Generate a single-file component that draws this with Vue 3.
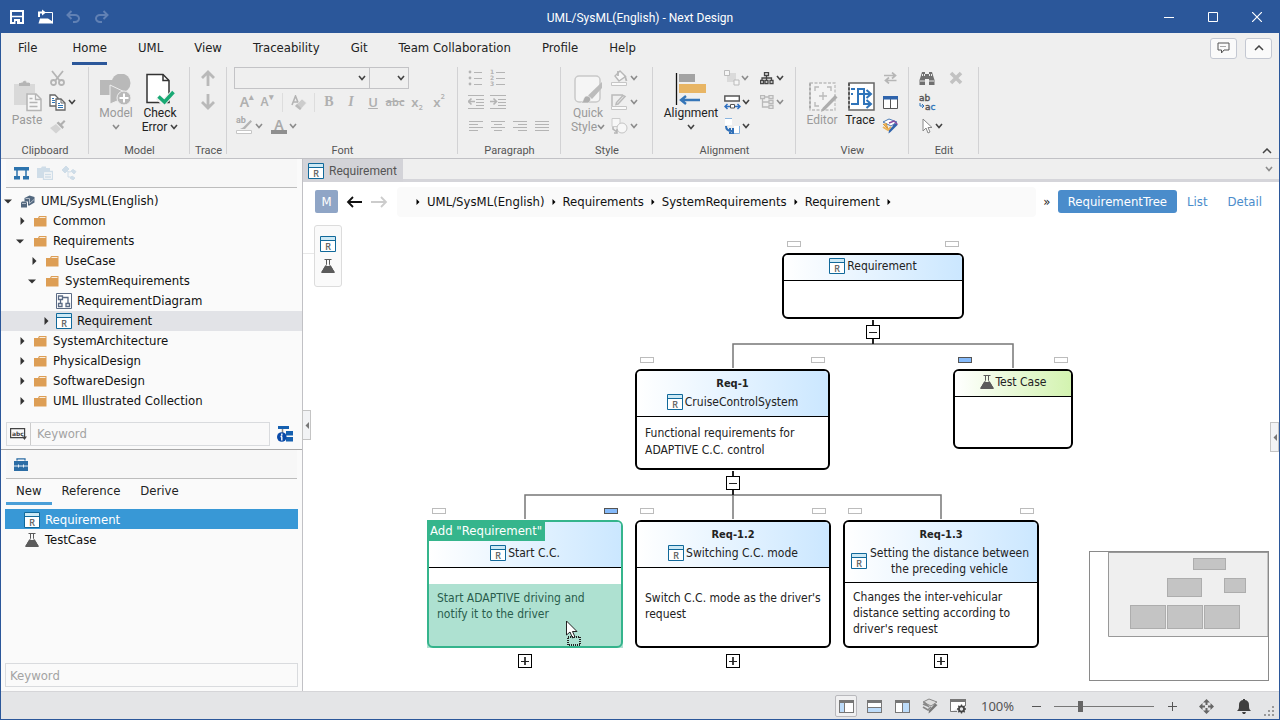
<script setup>
import { h, ref } from 'vue'

const G = '#b4b4b4'
const chev = (c) => [8, 6, `<path d="M1 1l3 3.500L7 1" fill="none" stroke="${c}" stroke-width="1.600"/>`]
const lines = (arr, c = '#bdbdbd') => arr.map(([x, y, w]) => `<rect x="${x}" y="${y}" width="${w}" height="1" fill="${c}"/>`).join('')
const panelIcon = (blue) => `<rect x=".5" y=".5" width="14" height="12" fill="#fff" stroke="#777"/><path d="M0 1.500h15" stroke="#777" stroke-width="3"/>${blue}`

const icons = {
  save: [14, 14, '<path d="M1 1h12v12H1z" fill="none" stroke="#fff" stroke-width="2"/><path d="M2 6.500h10" stroke="#fff" stroke-width="1.500"/><path d="M4 9h6v5H4z" fill="#fff"/><path d="M5.500 11h1.500v3H5.500z" fill="#2b579a"/>'],
  open: [15, 15, '<path d="M5.500 3.500h9v11" fill="none" stroke="#fff"/><path d="M.5 14.500l1.500-5h8l4.500 3v2z" fill="#fff"/><path d="M1 8V3.500h4" fill="none" stroke="#fff" stroke-width="2"/><path d="M4 .5l4 3-4 3z" fill="#fff"/>'],
  undo: [15, 13, '<path d="M5.500 1L1.500 5l4 4M1.500 5h7.500a4 3.500 0 0 1 0 7H7" fill="none" stroke="#6181b4" stroke-width="2"/>'],
  redo: [15, 13, '<path d="M9.500 1l4 4-4 4M13.500 5H6a4 3.500 0 0 0 0 7h2" fill="none" stroke="#6181b4" stroke-width="2"/>'],
  min: [10, 10, '<path d="M0 5.500h10" stroke="#fff"/>'],
  max: [10, 10, '<path d="M.5.5h9v9h-9z" fill="none" stroke="#fff"/>'],
  close: [10, 10, '<path d="M0 0l10 10M10 0L0 10" stroke="#fff" stroke-width="1.200"/>'],
  talk: [13, 12, '<path d="M1 1h11v7H7l-2.500 3V8H1z" fill="none" stroke="#555"/><path d="M3.500 4.500h6" stroke="#555" stroke-dasharray="1 1"/>'],
  fold: [10, 6, '<path d="M1 5l4-4 4 4" fill="none" stroke="#444" stroke-width="1.500"/>'],
  chev: chev('#444'), chevG: chev('#8c8c8c'),
  paste: [29, 32, '<path d="M1 4h6l1-2h2l2-2 2 2h2l1 2h5v9h-7v12H1z" fill="#d9d9d9"/><path d="M6 6h11V3h-3.500a2 2 0 0 0-4 0H6z" fill="#b5b5b5"/><path d="M14 14h9l5 5v11.500H14z" fill="#f7f7f7" stroke="#b5b5b5" stroke-width="1.500"/><path d="M22.500 14v5.500H28M16.500 18.500h3M16.500 22.500h8M16.500 26.500h8" fill="none" stroke="#b5b5b5" stroke-width="1.300"/>'],
  cut: [15, 16, `<g fill="none" stroke="${G}" stroke-width="1.800"><path d="M2 1l8 10M13 1L5 11"/><circle cx="3.500" cy="12.500" r="2.500"/><circle cx="11.500" cy="12.500" r="2.500"/></g>`],
  copy: [17, 17, '<g fill="#fff" stroke="#666" stroke-width="1.300"><path d="M1 1h5l3 3v8H1z"/><path d="M7 5h5l4 4v7H7z"/></g><path d="M12 5v4h4" fill="none" stroke="#666"/><path d="M3 4.500h2M3 6.500h3M3 8.500h3M9 9.500h2M9 11.500h5M9 13.500h5" stroke="#2e74b5"/>'],
  brush: [16, 15, '<path d="M0 9l6-4 5 5-5 4.500z" fill="#d3d3d3"/><path d="M6.500 4l6 6 1.500-2-2-2 3.500-3.500L14 1 10.500 4.500l-2-2z" fill="#b0b0b0"/>'],
  model: [32, 31, '<circle cx="21" cy="9" r="9.500" fill="#b9b9b9"/><path d="M0 6h15v15H0z" fill="#b9b9b9"/><path d="M10 11l19 9v2L10 30z" fill="#b9b9b9" stroke="#efefef"/><circle cx="24" cy="24" r="7" fill="#b9b9b9" stroke="#efefef"/><path d="M24 19.500v9M19.500 24h9" stroke="#fff" stroke-width="2"/>'],
  check: [32, 32, '<path d="M3 1.500h16l6 6v22H3z" fill="#fff" stroke="#333" stroke-width="1.500"/><path d="M19 1.500v6h6" fill="none" stroke="#333" stroke-width="1.500"/><path d="M14 24l5.500 5.500L30 19" fill="none" stroke="#efefef" stroke-width="6"/><path d="M14.500 23.500l6 5.500 9-10" fill="none" stroke="#19a974" stroke-width="3.500"/>'],
  up: [14, 16, '<path d="M7 16V2M1 8l6-6 6 6" fill="none" stroke="#b9b9b9" stroke-width="2.800"/>'],
  down: [14, 16, '<path d="M7 0v14M1 8l6 6 6-6" fill="none" stroke="#b9b9b9" stroke-width="2.800"/>'],
  eraser: [16, 15, `<path d="M1 10L4.500 1 8 10M2 7h4" fill="none" stroke="${G}" stroke-width="1.600"/><path d="M4 11l7-7 4.500 4-6.500 7z" fill="#ccc" stroke="#efefef" stroke-width=".6"/><path d="M4 11l2-2 4.500 4.500L9 15z" fill="#bababa"/>`],
  pen: [17, 16, `<path d="M14.500 2L7 9.500l-3 1.500h5l7-7.500z" fill="${G}"/><path d="M.5 12.500h15v3H.5z" fill="#fff" stroke="#c6c6c6"/>`],
  bullets: [16, 16, `<g fill="${G}"><circle cx="2" cy="2" r="1.400"/><circle cx="2" cy="8" r="1.400"/><circle cx="2" cy="14" r="1.400"/></g>` + lines([[6, 2, 8], [6, 8, 8], [6, 14, 8]], G)],
  numbers: [16, 20, `<g fill="${G}" font-family="DejaVu Sans" font-weight="bold" font-size="6"><text x="0" y="6">1</text><text x="0" y="12">2</text><text x="0" y="18">3</text></g>` + lines([[6, 4, 9], [6, 10, 9], [6, 16, 9]], G)],
  outdent: [16, 14, lines([[0, 0, 16], [8, 4, 8], [8, 7, 8], [8, 10, 8], [0, 13, 16]], G) + `<path d="M7 6.500H1M3.500 3.500l-3 3 3 3" fill="none" stroke="${G}" stroke-width="1.600"/>`],
  indent: [16, 14, lines([[0, 0, 16], [8, 4, 8], [8, 7, 8], [8, 10, 8], [0, 13, 16]], G) + `<path d="M0 6.500h6M3.500 3.500l3 3-3 3" fill="none" stroke="${G}" stroke-width="1.600"/>`],
  al: [14, 10, lines([[0, 0, 14], [0, 3, 9], [0, 6, 14], [0, 9, 9]], G)],
  ac: [14, 10, lines([[0, 0, 14], [3, 3, 8], [0, 6, 14], [3, 9, 8]], G)],
  ar: [14, 10, lines([[0, 0, 14], [5, 3, 9], [0, 6, 14], [5, 9, 9]], G)],
  aj: [14, 10, lines([[0, 0, 14], [0, 3, 14], [0, 6, 14], [0, 9, 14]], G)],
  quick: [29, 32, '<rect x="1" y="3" width="25" height="26" rx="4" fill="#f5f5f5" stroke="#c9c9c9" stroke-width="1.500"/><path d="M28 9v6L18 26l-4-3.500z" fill="#bcbcbc"/><path d="M7 30c3-1 2-7 6-7s5 5 1 7z" fill="#b0b0b0" stroke="#efefef" stroke-width=".6"/>'],
  fill: [17, 16, '<path d="M4 6l5-5 5.500 5.500L8 11z" fill="#f7f7f7" stroke="#b8b8b8" stroke-width="1.400"/><path d="M7 1v5M14 6l1.500 5" stroke="#b8b8b8" stroke-width="1.800"/><path d="M.5 12.500h15v3H.5z" fill="#fafafa" stroke="#c6c6c6"/>'],
  line: [17, 16, '<path d="M12 1H1v11M14 2.500L7 10l-2 .5.500-2L12 1.500z" fill="none" stroke="#bbb" stroke-width="1.500"/><path d="M.5 12.500h15v3H.5z" fill="#fafafa" stroke="#c6c6c6"/>'],
  shape: [17, 16, '<path d="M1 .5h8v8H1z" fill="#f7f7f7" stroke="#ccc"/><circle cx="11" cy="10" r="5" fill="#f7f7f7" stroke="#c4c4c4"/><path d="M2 9v2l4 3M6 11v4H3" fill="none" stroke="#b5b5b5" stroke-width="1.500"/>'],
  align: [32, 32, '<path d="M1.500 0v32" stroke="#111" stroke-width="1.300"/><path d="M4 1h16v8H4z" fill="#a3a3a3"/><path d="M4 11h27v9H4z" fill="#e8b564"/><path d="M25 27H6M11 23l-5 4 5 4" fill="none" stroke="#3676b8" stroke-width="2.400"/>'],
  grp: [16, 16, '<path d="M3 3h9v9H3z" fill="#dadada"/><path d="M.5.5h5v5h-5zM10 10h5v5h-5z" fill="#f5f5f5" stroke="#bbb"/>'],
  dist: [17, 15, '<path d="M.8 1h14.500v5H.8z" fill="#fff" stroke="#555" stroke-width="1.400"/><path d="M6.500 9.500h4v3.500h-4z" fill="#fff" stroke="#555"/><path d="M6 11.500H1.500M3.500 9L1 11.500 3.500 14M11 11.500h4.500M13.500 9l2.500 2.500-2.500 2.500" fill="none" stroke="#3070c0" stroke-width="1.500"/>'],
  layout: [17, 16, '<path d="M1 0h7v7H1zM10 8h5v7h-5z" fill="#fff"/><path d="M1 .5h7M15.500 8v7.500H10" fill="none" stroke="#8ab4de"/><path d="M2 8c0 4 2 5 6 5M6 10v5.500h3V10" fill="none" stroke="#3070b8" stroke-width="2"/>'],
  org: [14, 13, '<path d="M4.500.5h4v3h-4zM.5 8.500h3v3h-3zM5 8.500h3v3H5zM10 8.500h3v3h-3zM6.500 4v4M2 8V6h9.500v2" fill="none" stroke="#444" stroke-width="1.300"/>'],
  orgG: [14, 14, '<path d="M.5.500h4v3h-4zM9 .500h4v3H9zM9 5.500h4v3H9zM9 10.500h4v3H9zM2.500 4v8H9M2.500 7H9M5 2h4" fill="none" stroke="#b9b9b9" stroke-width="1.300"/>'],
  editor: [31, 32, '<g transform="translate(0 2)"><path d="M3 1h25v27H3z" fill="#f3f3f3" stroke="#bdbdbd" stroke-width="1.300" stroke-dasharray="3 1.500"/><path d="M2 2.500h2M2 7h2M2 11.500h2M2 16h2M2 20.500h2M2 25h2" stroke="#aaa" stroke-width="2.500"/><path d="M8 9V5h4M20 5h4v4M8 20v4h4M16 10v8M12 14h8" fill="none" stroke="#bbb" stroke-width="1.400"/><path d="M28 13l2.500 2.500L18 28l-4 2 1.500-4z" fill="#adadad"/></g>'],
  trace: [29, 32, '<g transform="translate(0 2)"><path d="M3 1h25v27H3z" fill="#fff" stroke="#666" stroke-width="1.500"/><path d="M2 2.500h2M2 7h2M2 11.500h2M2 16h2M2 20.500h2M2 25h2" stroke="#555" stroke-width="2.500"/><path d="M2.500 4.500h1M2.500 9h1M2.500 14h1M2.500 18.500h1M2.500 23h1" stroke="#fff"/><path d="M5 22h7V7h6v15h6M5 7h4" fill="none" stroke="#2f74ba" stroke-width="2"/><path d="M5 12h2M12 12h12M20.500 8l4.500 4-4.500 4M20.500 18l4.500 4-4.500 4" fill="none" stroke="#2f74ba" stroke-width="2"/></g>'],
  swap: [13, 12, '<path d="M0 3.500h11M8 .5l3.500 3L8 6.500M12.500 8.500h-11M5 5.500l-3.500 3 3.500 3" fill="none" stroke="#b6b6b6" stroke-width="1.700"/>'],
  split: [15, 13, '<path d="M.5.5h14v12H.5zM7.500 3v10" fill="#fff" stroke="#555"/><path d="M0 0h15v3.500H0z" fill="#2f64ac"/>'],
  palette: [17, 16, '<path d="M1 4l6-3 8 3-6 4z" fill="#fff" stroke="#4a7ab5"/><path d="M1 6l5 5-2-6" fill="#edb45b" stroke="#d89a3f"/><path d="M7 5l5-2 3 3-4 2" fill="none" stroke="#8a4aa0" stroke-width="1.400"/><path d="M1 9l5 3 3-3" fill="none" stroke="#edb45b" stroke-width="2"/><path d="M15.500 7l-7 7-2 1.500.500-3 6-7z" fill="#2f64ac"/>'],
  bino: [16, 14, '<path d="M3 1h3v2h4V1h3l1.500 5 1 3v5H10V8H6v6H.5V9l1-3z" fill="#707070"/><path d="M3.500 3v2M5.500 3v2M10.500 3v2M12.500 3v2M1 10h5M10 10h5" stroke="#e9e9e9"/>'],
  replace: [18, 20, '<g font-family="DejaVu Sans" font-size="9" fill="#555" stroke="#555" stroke-width=".4"><text x="0" y="9">ab</text><text x="6" y="18">a<tspan fill="#2f74ba" stroke="#2f74ba">c</tspan></text></g><path d="M1 11v3h4M3 12l2 2-2 2" fill="none" stroke="#2f74ba"/>'],
  cursor: [11, 16, '<path d="M1 1v12l3-3 2 5 2-1-2-4.500h4z" fill="#fff" stroke="#888"/>'],
  del: [14, 14, '<path d="M2 2l10 10M12 2L2 12" stroke="#c2c2c2" stroke-width="3.600"/>'],
  treeB: [15, 13, '<path d="M0 0h15v3.500H0zM0 9h6v3.500H0zM9 9h6v3.500H9z" fill="#2c73ad"/><path d="M3 3v6M12 3v6" stroke="#2c73ad" stroke-width="1.500"/>'],
  sheets: [16, 14, '<path d="M0 2h4l1-1.500h4V2h4v3H6v7H0z" fill="#cfdde8"/><path d="M6.500 5.500h9v8h-9zM8 8.500h6M8 11h6" fill="#f7f7f7" stroke="#cfdde8" stroke-width="1.300"/>'],
  nodes: [15, 14, '<path d="M0 4l4-4 3 3-4 4zM9 5l2-1.500 3 2-2 2.500zM8 12l2-2 3 2-2 2z" fill="#cfdde8" stroke="#cfdde8"/><path d="M5 5l2 1 3-.5M6 6v5h3" fill="none" stroke="#cfdde8"/>'],
  project: [14, 13, '<path d="M3.500 3l5-2.500 5 1.500v5.500l-5 3H7V6.500H3.500z" fill="#53687f"/><path d="M0 7.500l1-1h4l1 1V12.500H0z" fill="#53687f"/><path d="M4.500 3.500h4v5l4.500-4M1 8.500h4" fill="none" stroke="#c9d1d9" stroke-width=".8"/>'],
  folder: [13, 11, '<path d="M0 2h4l1-2h7.500v10.500H0z" fill="#dd9e55"/><path d="M5.500 1.500h6" stroke="#fff" stroke-width=".8"/>'],
  diagram: [16, 16, '<path d="M.5.5h15v15H.5z" fill="#fff" stroke="#5b6b85"/><path d="M2.500 3h4v3.500h-4zM2.500 10.500h3.500v3H2.500zM10 10.500h3.500v3H10zM4.500 7v3M7 4.500h5v6" fill="none" stroke="#5b6b85" stroke-width="1.300"/>'],
  req: [16, 16, '<path d="M.5.5h15v15H.5z" fill="#fff" stroke="#11699a"/><path d="M1 1h14v3H1z" fill="#cde9f5"/><path d="M1 4.500h14" stroke="#11699a"/><text x="8" y="13.500" text-anchor="middle" font-family="Noto Sans" font-size="9" fill="#555" stroke="#555" stroke-width=".2">R</text>'],
  flask: [14, 14, '<path d="M3.500.500h7" stroke="#5b5b5b"/><path d="M5.500 1v4.500L1 13M8.500 1v4.500L13 13" fill="none" stroke="#5b5b5b"/><path d="M4 7h6l4 6.500-1 .5H1l-1-.5z" fill="#5b5b5b"/>'],
  down_: [8, 5, '<path d="M0 .500h8L4 4.500z" fill="#333"/>'],
  closed: [5, 8, '<path d="M.5 0v8l4-4z" fill="#333"/>'],
  abc: [17, 12, '<path d="M.6.600h14v9h-14z" fill="none" stroke="#444" stroke-width="1.200"/><text x="2" y="8" font-family="DejaVu Sans" font-weight="bold" font-size="6" fill="#444">abc</text><path d="M12 8.500h5L14.500 12z" fill="#444"/>'],
  info: [16, 16, '<path d="M1 0h11v3H1zM9 5h7v4.500H9zM9 11h7v4.500H9z" fill="#1560b0"/><path d="M5.500 3v4" stroke="#888" stroke-width="1.500"/><circle cx="4.800" cy="11" r="4.800" fill="#0a4aa8"/><path d="M4.800 7.500v2M4.800 10.500v4M3.500 10.500h1.500" stroke="#fff" stroke-width="1.400"/>'],
  box: [14, 13, '<path d="M3 2.500V.8h8v1.700" fill="none" stroke="#2c6da5" stroke-width="1.300"/><path d="M0 3h14v10H0z" fill="#2c6da5"/><path d="M0 8h14M4.500 6.500v3M9.500 6.500v3" stroke="#e8f0f7"/>'],
  back: [17, 12, '<path d="M16 6H2M7 1L2 6l5 5" fill="none" stroke="#111" stroke-width="1.800"/>'],
  fwd: [17, 12, '<path d="M0 6h14.500M10 1l5 5-5 5" fill="none" stroke="#ccc" stroke-width="1.800"/>'],
  tri: [4, 6, '<path d="M.5 0v6l3-3z" fill="#000"/>'],
  left: [4, 7, '<path d="M4 0v7L.5 3.500z" fill="#777"/>'],
  lay1: [15, 13, panelIcon('<path d="M1 3h4v9H1z" fill="#bddcfa"/><path d="M5.500 3v9" stroke="#777"/>')],
  lay2: [15, 13, panelIcon('<path d="M1 8h13v4H1z" fill="#bddcfa"/><path d="M1 7.500h13" stroke="#777"/>')],
  lay3: [15, 13, panelIcon('<path d="M8 3h6v9H8z" fill="#bddcfa"/><path d="M7.500 3v9" stroke="#777"/>')],
  palG: [17, 16, '<path d="M1 4l6-3 8 3-6 4z" fill="#ddd" stroke="#888"/><path d="M1 6l5 2M1 9l5 3 3-3M2 4l5 5" fill="none" stroke="#888" stroke-width="1.700"/><path d="M15.500 7l-7 7-2 1.500.500-3 6-7z" fill="#777"/>'],
  winG: [17, 15, '<path d="M.5 12.500V.5h15V7M.500 12.500H7" fill="#fff" stroke="#777"/><path d="M0 1.500h16" stroke="#777" stroke-width="3"/><circle cx="11.500" cy="10" r="2.600" fill="none" stroke="#444" stroke-width="1.800"/><path d="M11.500 5.500v1.500M11.500 13v1.500M7 10h1.500M14.500 10H16M8.300 6.800l1.200 1.200M13.500 12l1.200 1.200M14.700 6.800L13.500 8M9.500 12l-1.200 1.200" stroke="#444" stroke-width="1.300"/>'],
  minus: [9, 9, '<path d="M0 4.500h9" stroke="#555"/>'],
  plus: [9, 9, '<path d="M0 4.500h9M4.500 0v9" stroke="#555"/>'],
  move: [15, 15, '<path d="M7.500 0L11 3.500H4zM7.500 15L11 11.500H4zM0 7.500L3.500 4v7zM15 7.500L11.500 4v7z" fill="#666"/><path d="M7.500 3v3M7.500 9v3M3 7.500h3M9 7.500h3" stroke="#666" stroke-width="2"/>'],
  bell: [14, 15, '<path d="M0 12c2-2 2-3 2-6a5 5 0 0 1 4-5V0h2v1a5 5 0 0 1 4 5c0 3 0 4 2 6zM5 13h4l-1 2H6z" fill="#3f3f3f"/>'],
  grip: [11, 11, '<path d="M8 0h2v2H8zM4 4h2v2H4zM8 4h2v2H8zM0 8h2v2H0zM4 8h2v2H4zM8 8h2v2H8z" fill="#999"/>'],
  drag: [16, 26, '<path d="M1.500 1v14l3.500-3 2.500 6 2.500-1L7.500 11.500h4.500z" fill="#fff" stroke="#222"/><path d="M3 17h12v8H3z" fill="none" stroke="#222" stroke-width="2" stroke-dasharray="1 1"/>']
}
const Ic = (p) => {
  const [w, ht, body] = icons[p.n]
  return h('svg', { class: 'ic', width: w, height: ht, viewBox: `0 0 ${w} ${ht}`, 'aria-hidden': 'true', innerHTML: body })
}
Ic.props = ['n']

const menus = ['File', 'Home', 'UML', 'View', 'Traceability', 'Git', 'Team Collaboration', 'Profile', 'Help']
const formats = [
  ['Bold', 'B', 'f-b'], ['Italic', 'I', 'f-i'], ['Underline', 'U', 'f-u'], ['Strikethrough', 'abc', 'f-s']
]
const paragraphs = [['bullets', 'numbers'], ['outdent', 'indent'], ['al', 'ac', 'ar', 'aj']]
const tree = [
  { t: 'UML/SysML(English)', d: 0, i: 'project', s: 'down_' },
  { t: 'Common', d: 1, i: 'folder', s: 'closed' },
  { t: 'Requirements', d: 1, i: 'folder', s: 'down_' },
  { t: 'UseCase', d: 2, i: 'folder', s: 'closed' },
  { t: 'SystemRequirements', d: 2, i: 'folder', s: 'down_' },
  { t: 'RequirementDiagram', d: 3, i: 'diagram' },
  { t: 'Requirement', d: 3, i: 'req', s: 'closed', sel: true },
  { t: 'SystemArchitecture', d: 1, i: 'folder', s: 'closed' },
  { t: 'PhysicalDesign', d: 1, i: 'folder', s: 'closed' },
  { t: 'SoftwareDesign', d: 1, i: 'folder', s: 'closed' },
  { t: 'UML Illustrated Collection', d: 1, i: 'folder', s: 'closed' }
]
const crumbs = ['UML/SysML(English)', 'Requirements', 'SystemRequirements', 'Requirement']
const nodes = [
  { x: 479, y: 35, w: 182, h: 66, hh: 26, name: 'Requirement', sign: '−' },
  { x: 332, y: 151, w: 195, h: 101, hh: 46, id: 'Req-1', name: 'CruiseControlSystem', text: 'Functional requirements for ADAPTIVE C.C. control', sign: '−' },
  { x: 650, y: 151, w: 120, h: 80, hh: 26, name: 'Test Case', kind: 'test', l: true },
  { x: 124, y: 302, w: 196, h: 128, hh: 46, id: 'Req-1.1', name: 'Start C.C.', text: 'Start ADAPTIVE driving and notify it to the driver', sign: '+', kind: 'drop', r: true, low: true },
  { x: 332, y: 302, w: 196, h: 128, hh: 46, id: 'Req-1.2', name: 'Switching C.C. mode', text: "Switch C.C. mode as the driver's request", sign: '+', low: true },
  { x: 540, y: 302, w: 196, h: 128, hh: 61, id: 'Req-1.3', name: 'Setting the distance between the preceding vehicle', text: "Changes the inter-vehicular distance setting according to driver's request", sign: '+', kind: 'tall' }
]
const place = (n) => ({ left: n.x + 'px', top: n.y + 'px', width: n.w + 'px', height: n.h + 'px' })
const zoom = ref(25)
</script>

<template>
  <div class="app">
    <header class="title">
      <div class="quick">
        <button aria-label="Save"><Ic n="save" /></button>
        <button aria-label="Open"><Ic n="open" /></button>
        <button aria-label="Undo"><Ic n="undo" /></button>
        <button aria-label="Redo"><Ic n="redo" /></button>
      </div>
      <h1>UML/SysML(English) - Next Design</h1>
      <div class="win">
        <button aria-label="Minimize"><Ic n="min" /></button>
        <button aria-label="Maximize"><Ic n="max" /></button>
        <button aria-label="Close"><Ic n="close" /></button>
      </div>
    </header>

    <nav class="menu">
      <button v-for="m in menus" :key="m" :class="{ on: m === 'Home', file: m === 'File' }">{{ m }}</button>
      <span class="grow"></span>
      <button class="sq" aria-label="Feedback"><Ic n="talk" /></button>
      <button class="sq" aria-label="Hide ribbon"><Ic n="fold" /></button>
    </nav>

    <section class="ribbon">
      <div class="group g-clip">
        <div class="tools">
          <button class="big off"><Ic n="paste" /><span>Paste</span></button>
          <div class="col">
            <button aria-label="Cut"><Ic n="cut" /></button>
            <button aria-label="Copy"><Ic n="copy" /><Ic n="chev" /></button>
            <button aria-label="Format painter"><Ic n="brush" /></button>
          </div>
        </div>
        <div class="cap">Clipboard</div>
      </div>
      <div class="group g-model">
        <div class="tools">
          <button class="big off"><Ic n="model" /><span>Model<br><Ic n="chevG" /></span></button>
          <button class="big"><Ic n="check" /><span>Check<br>Error <Ic n="chev" /></span></button>
        </div>
        <div class="cap">Model</div>
      </div>
      <div class="group g-trace">
        <div class="tools">
          <div class="col">
            <button aria-label="Trace up"><Ic n="up" /></button>
            <button aria-label="Trace down"><Ic n="down" /></button>
          </div>
        </div>
        <div class="cap">Trace</div>
      </div>
      <div class="group g-font">
        <div class="rows">
          <div class="row combo">
            <span class="pick family"><select aria-label="Font family"><option></option></select><Ic n="chev" /></span>
            <span class="pick size"><select aria-label="Font size"><option></option></select><Ic n="chev" /></span>
          </div>
          <div class="row">
            <button class="cell20 grown" aria-label="Grow font">A<sup>▴</sup></button>
            <button class="cell20 shrunk" aria-label="Shrink font">A<sup>▾</sup></button>
            <i class="bar"></i>
            <button class="cell30" aria-label="Clear formatting"><Ic n="eraser" /></button>
            <i class="bar"></i>
            <button v-for="f in formats" :key="f[0]" class="cell" :class="f[2]" :aria-label="f[0]">{{ f[1] }}</button>
            <button class="cell f-x" aria-label="Subscript">x<sub>2</sub></button>
            <button class="cell f-x" aria-label="Superscript">x<sup>2</sup></button>
          </div>
          <div class="row third">
            <button class="hl" aria-label="Highlight"><span class="pic"><span class="ab">ab</span><Ic n="pen" /></span><Ic n="chevG" /></button>
            <button class="hl" aria-label="Font color"><span class="fc">A</span><Ic n="chevG" /></button>
          </div>
        </div>
        <div class="cap">Font</div>
      </div>
      <div class="group g-para">
        <div class="rows">
          <div v-for="(r, k) in paragraphs" :key="k" class="row">
            <button v-for="i in r" :key="i" class="cell" :aria-label="i"><Ic :n="i" /></button>
          </div>
        </div>
        <div class="cap">Paragraph</div>
      </div>
      <div class="group g-style">
        <div class="tools">
          <button class="big off"><Ic n="quick" /><span>Quick<br>Style<Ic n="chevG" /></span></button>
          <div class="col">
            <button aria-label="Fill"><Ic n="fill" /><Ic n="chevG" /></button>
            <button aria-label="Line"><Ic n="line" /><Ic n="chevG" /></button>
            <button aria-label="Shape"><Ic n="shape" /><Ic n="chevG" /></button>
          </div>
        </div>
        <div class="cap">Style</div>
      </div>
      <div class="group g-align">
        <div class="tools">
          <button class="big"><Ic n="align" /><span>Alignment<br><Ic n="chev" /></span></button>
          <div class="col">
            <button aria-label="Order"><Ic n="grp" /><Ic n="chevG" /></button>
            <button aria-label="Distribute"><Ic n="dist" /><Ic n="chev" /></button>
            <button aria-label="Route"><Ic n="layout" /><Ic n="chev" /></button>
          </div>
          <div class="col">
            <button aria-label="Tree layout"><Ic n="org" /><Ic n="chev" /></button>
            <button aria-label="Side layout"><Ic n="orgG" /><Ic n="chevG" /></button>
          </div>
        </div>
        <div class="cap">Alignment</div>
      </div>
      <div class="group g-view">
        <div class="tools">
          <button class="big off"><Ic n="editor" /><span>Editor</span></button>
          <button class="big"><Ic n="trace" /><span>Trace</span></button>
          <div class="col">
            <button aria-label="Swap"><Ic n="swap" /></button>
            <button aria-label="Split"><Ic n="split" /></button>
            <button aria-label="Theme"><Ic n="palette" /></button>
          </div>
        </div>
        <div class="cap">View</div>
      </div>
      <div class="group g-edit">
        <div class="tools">
          <div class="col">
            <button aria-label="Find"><Ic n="bino" /></button>
            <button aria-label="Replace"><Ic n="replace" /></button>
            <button aria-label="Select"><Ic n="cursor" /><Ic n="chev" /></button>
          </div>
          <div class="col"><button aria-label="Delete"><Ic n="del" /></button></div>
        </div>
        <div class="cap">Edit</div>
      </div>
      <button class="collapse" aria-label="Collapse ribbon"><Ic n="fold" /></button>
    </section>

    <div class="body">
      <aside class="side">
        <div class="bar1">
          <button aria-label="Model tree"><Ic n="treeB" /></button>
          <button aria-label="Pages"><Ic n="sheets" /></button>
          <button aria-label="Relations"><Ic n="nodes" /></button>
        </div>
        <ul class="tree">
          <li v-for="r in tree" :key="r.t" :class="['d' + r.d, { sel: r.sel }]">
            <span class="arrow" :class="r.s"><Ic v-if="r.s" :n="r.s" /></span>
            <span class="kind"><Ic :n="r.i" /></span>{{ r.t }}
          </li>
        </ul>
        <div class="search">
          <div class="field">
            <button aria-label="Match options"><Ic n="abc" /></button>
            <input aria-label="Filter the model tree" placeholder="Keyword" />
          </div>
          <button aria-label="Tree information"><Ic n="info" /></button>
        </div>
        <div class="bar1 tool"><button aria-label="Toolbox"><Ic n="box" /></button></div>
        <div class="tabs">
          <button class="on">New</button><button>Reference</button><button>Derive</button>
        </div>
        <ul class="palette">
          <li class="sel"><span><Ic n="req" /></span>Requirement</li>
          <li><span><Ic n="flask" /></span>TestCase</li>
        </ul>
        <input class="kw" aria-label="Filter the toolbox" placeholder="Keyword" />
        <button class="handle" aria-label="Collapse side panel"><Ic n="left" /></button>
      </aside>

      <main class="main">
        <div class="docs">
          <button class="doc"><Ic n="req" />Requirement</button>
          <span class="grow"></span>
          <button class="more" aria-label="Open documents"><Ic n="chevG" /></button>
        </div>
        <div class="nav">
          <button class="m">M</button>
          <button class="go" aria-label="Back"><Ic n="back" /></button>
          <button class="go" aria-label="Forward"><Ic n="fwd" /></button>
          <div class="crumbs">
            <Ic n="tri" />
            <template v-for="c in crumbs" :key="c"><a href="#">{{ c }}</a><Ic n="tri" /></template>
          </div>
          <span class="over">»</span>
          <button class="view on">RequirementTree</button>
          <button class="view">List</button>
          <button class="view">Detail</button>
        </div>
        <div class="canvas">
          <svg class="links" width="1000" height="460" aria-hidden="true">
            <g fill="none" stroke="#777" stroke-width="1.500">
              <path d="M430 150V126h280v24M570 120v6" />
              <path d="M222 301V277h416v24M430 277v24" />
            </g>
            <path d="M570 102v24M430 253v24" stroke="#222" stroke-width="2" />
            <path d="M0 35.500h12" stroke="#e8e8e8" />
          </svg>
          <div class="dock">
            <button aria-label="Requirement"><Ic n="req" /></button>
            <button aria-label="Test case"><Ic n="flask" /></button>
          </div>
          <article v-for="n in nodes" :key="n.name" class="node" :class="n.kind" :style="place(n)">
            <i class="pin l" :class="{ lit: n.l }"></i>
            <i class="pin r" :class="{ lit: n.r }"></i>
            <div class="card">
              <div class="head" :style="{ height: n.hh + 'px' }">
                <strong v-if="n.id && n.kind !== 'drop'">{{ n.id }}</strong>
                <strong v-else-if="n.id">&nbsp;</strong>
                <div class="name"><Ic :n="n.kind === 'test' ? 'flask' : 'req'" /><span>{{ n.name }}</span></div>
              </div>
              <p v-if="n.text" :class="{ low: n.low }">{{ n.text }}</p>
            </div>
            <span v-if="n.kind === 'drop'" class="flag">Add "Requirement"</span>
            <button v-if="n.sign" class="fold" :class="{ plus: n.sign === '+' }" aria-label="Toggle children"></button>
          </article>
          <div class="pointer"><Ic n="drag" /></div>
          <div class="mini">
            <svg width="178" height="128" viewBox="0 0 178 128" aria-hidden="true">
              <path d="M18.500 0v84.500H178V.500H18.500" fill="#efefef" stroke="#999" />
              <g fill="#c4c4c4" stroke="#adadad">
                <rect x="103.500" y="6.500" width="32" height="11" /><rect x="77.500" y="26.500" width="34" height="18" />
                <rect x="134.500" y="26.500" width="21" height="14" /><rect x="40.500" y="53.500" width="35" height="23" />
                <rect x="77.500" y="53.500" width="35" height="23" /><rect x="114.500" y="53.500" width="35" height="23" />
              </g>
            </svg>
          </div>
          <button class="handle right" aria-label="Expand inspector"><Ic n="left" /></button>
        </div>
      </main>
    </div>

    <footer class="status">
      <button class="st on" aria-label="Left layout"><Ic n="lay1" /></button>
      <button class="st" aria-label="Bottom layout"><Ic n="lay2" /></button>
      <button class="st" aria-label="Right layout"><Ic n="lay3" /></button>
      <button class="st" aria-label="Theme"><Ic n="palG" /></button>
      <button class="st" aria-label="Window settings"><Ic n="winG" /></button>
      <span class="pct">100%</span>
      <button class="st step" aria-label="Zoom out"><Ic n="minus" /></button>
      <input v-model="zoom" class="zoom" type="range" min="0" max="100" aria-label="Zoom" />
      <button class="st step in" aria-label="Zoom in"><Ic n="plus" /></button>
      <button class="st wide" aria-label="Fit"><Ic n="move" /></button>
      <button class="st wide" aria-label="Notifications"><Ic n="bell" /></button>
      <span class="grip"><Ic n="grip" /></span>
    </footer>
  </div>
</template>

<style>
html, body { margin: 0; height: 100%; }
#app { height: 100%; }
</style>

<style scoped>
.app { --wide: "DejaVu Sans Condensed", "DejaVu Sans", sans-serif; height: 100vh; display: flex; flex-direction: column; box-sizing: border-box; border: 1px solid #2b579a; border-top: 0; font: 12px/16px Roboto, "Noto Sans", sans-serif; color: #222; background: #fff; overflow: hidden; }
.app * { box-sizing: border-box; }
button { font: inherit; color: inherit; border: 0; padding: 0; margin: 0; background: none; display: inline-flex; align-items: center; justify-content: center; white-space: nowrap; }
input, select { font: inherit; border-radius: 0; margin: 0; }
ul { list-style: none; margin: 0; padding: 0; }
:deep(.ic), .ic { display: block; flex: none; }
.grow { flex: 1; }

.title { height: 33px; flex: none; background: #2b579a; color: #fff; display: grid; grid-template-columns: 1fr auto 1fr; align-items: center; }
.title h1 { font-size: 12px; font-weight: 400; margin: 2px 0 0; }
.quick { display: flex; padding-left: 2px; }
.quick button { width: 28px; height: 30px; }
.win { display: flex; justify-content: flex-end; }
.win button { width: 44px; height: 32px; }

.menu { height: 33px; flex: none; background: #efefef; display: flex; align-items: center; padding: 0 7px 0 2px; font: 13px/16px var(--wide); }
.menu button { height: 30px; margin: 0 16px 0 15px; border-bottom: 3px solid transparent; }
.menu button.file { margin-right: 20px; }
.menu button.on { border-color: #2b579a; }
.menu .sq { width: 27px; height: 21px; margin: 0 0 3px 8px; border: 1px solid #c4c8d2; border-radius: 3px; background: #fafafa; }

.ribbon { flex: none; height: 93px; background: #efefef; border-bottom: 1px solid #c1c1c5; display: flex; position: relative; }
.group { flex: none; position: relative; display: flex; flex-direction: column; }
.group::after { content: ""; position: absolute; right: 0; top: 1px; height: 87px; width: 1px; background: #d2d2d4; }
.g-clip { width: 88px; } .g-model { width: 101px; } .g-trace { width: 37px; } .g-font { width: 231px; }
.g-para { width: 103px; } .g-style { width: 92px; } .g-align { width: 143px; } .g-view { width: 113px; } .g-edit { width: 70px; }
.cap { text-align: center; font-size: 11px; line-height: 16px; padding-top: 5px; color: #555; }
.tools, .rows { height: 72px; flex: none; }
.tools { display: flex; }
.row { height: 24px; display: flex; align-items: center; }
.big { display: block; flex: none; width: 44px; height: 72px; padding-top: 3px; text-align: center; }
.big > :deep(.ic) { display: block; margin: 0 auto 1px; }
.big span { display: block; line-height: 14px; }
.big span :deep(.ic) { display: inline-block; vertical-align: 1px; }
.off { color: #9a9a9a; }
.col { display: grid; grid-template-rows: repeat(3, 24px); }
.col button { justify-content: flex-start; gap: 2px; }
.g-clip .tools { padding-left: 4px; } .g-clip .col button:not(:nth-child(2)) { padding-left: 1px; }
.g-model .tools { padding-left: 5px; }
.g-trace .col { padding-left: 11px; }
.g-font .rows { padding-left: 7px; }
.pick { position: relative; height: 22px; display: flex; align-items: center; justify-content: flex-end; }
.pick select { position: absolute; inset: 0; width: 100%; height: 100%; border: 1px solid #c3c3c6; background: transparent; appearance: none; }
.pick :deep(.ic) { margin-right: 4px; }
.family { width: 136px; } .size { width: 40px; margin-left: -1px; }
.cell { width: 22px; height: 22px; }
.cell20 { width: 20px; height: 22px; } .cell30 { width: 31px; height: 22px; }
.bar { width: 1px; height: 19px; background: #ddd; }
.grown, .shrunk, .cell { color: #b0b0b0; font-weight: 600; font-family: "Noto Sans", sans-serif; }
.grown { font-size: 14px; margin-left: 3px; } .shrunk { font-size: 12px; margin-right: 5px; }
.cell20 sup { font-size: 9px; align-self: flex-start; line-height: 12px; }
.f-b, .f-i { font-family: "Liberation Serif", serif; font-size: 14px; font-weight: 700; }
.f-i { font-style: italic; } .f-u { text-decoration: underline; font-size: 13px; } .f-s { text-decoration: line-through; font-size: 11px; }
.f-b { margin-left: 3px; }
.f-x { font-size: 13px; } .f-x sub { font-size: 7px; align-self: flex-end; line-height: 10px; } .f-x sup { font-size: 7px; align-self: flex-start; line-height: 12px; }
.hl { gap: 2px; margin: 0 6px 0 2px; color: #aaa; }
.pic { position: relative; width: 17px; } .ab { position: absolute; left: 0; top: -4px; font-size: 9px; line-height: 12px; font-weight: 700; }
.fc { width: 16px; height: 15px; border-bottom: 4px solid #8f8f8f; font: 600 14px/12px "Noto Sans", sans-serif; }
.g-para .rows { padding-left: 7px; }
.g-style .tools { padding-left: 5px; } .g-style .col { padding-left: 1px; }
.g-align .big { width: 62px; } .g-align .tools { padding-left: 7px; } .g-align .col { padding-left: 2px; width: 36px; }
.g-align .col button { gap: 1px; } .g-align .col + .col button { gap: 2px; }
.g-view .tools { padding-left: 7px; } .g-view .big { width: 38px; } .g-view .col { width: 22px; } .g-view .col button { justify-content: center; }
.g-edit .tools { padding-left: 10px; } .g-edit .col { width: 36px; }
.g-edit .col button:last-child:nth-child(3) { padding-left: 3px; }
.collapse { position: absolute; right: 7px; bottom: 4px; }

.body { flex: 1; min-height: 0; display: flex; font: 13px/16px var(--wide); }
.side { width: 302px; flex: none; background: #fafafa; border-right: 1px solid #c1c1c5; display: flex; flex-direction: column; position: relative; }
.bar1 { height: 29px; flex: none; margin: 0 5px; padding-left: 3px; background: #f7f7f7; border-bottom: 1px solid #bdbdbd; display: flex; align-items: center; }
.bar1 button { width: 24px; height: 24px; }
.tree { padding-top: 3px; flex: 1; color: #111; }
.tree li { height: 20px; display: flex; align-items: center; white-space: nowrap; }
.tree .sel { background: #e2e3e7; }
.arrow { width: 14px; display: flex; justify-content: center; }
.kind { width: 26px; display: flex; justify-content: center; }
.d1 { padding-left: 14px; } .d2 { padding-left: 26px; } .d3 { padding-left: 38px; }
.d1 .kind, .d2 .kind, .d3 .kind { width: 24px; padding-right: 2px; }
.d1 .down_, .d2 .down_ { padding-right: 4px; }
.search { height: 31px; flex: none; display: flex; align-items: center; padding: 0 9px 0 5px; border-bottom: 1px solid #a8a8a8; justify-content: space-between; }
.field { display: flex; width: 264px; height: 24px; border: 1px solid #d9dbde; background: #f9f9f9; }
.field button { width: 24px; border-right: 1px solid #ccc; }
.field input { flex: 1; min-width: 0; border: 0; padding: 0 6px; background: transparent; }
input::placeholder { color: #a3a3a3; opacity: 1; }
.tabs { display: flex; height: 26px; flex: none; margin-left: 5px; }
.tabs button { padding: 0 10px; border-bottom: 3px solid transparent; }
.tabs .on { border-color: #4a9fd8; }
.palette { padding: 4px 4px 0; height: 158px; flex: none; color: #111; }
.palette li { height: 20px; display: flex; align-items: center; padding-top: 2px; }
.palette li span { width: 40px; display: flex; justify-content: center; padding-left: 14px; }
.palette .sel { background: #3898d6; color: #fff; }
.kw { margin: 0 4px 4px; height: 24px; flex: none; border: 1px solid #d9dbde; background: #fafafa; padding: 0 4px; }
.handle { position: absolute; z-index: 2; width: 9px; height: 30px; right: -9px; top: 251px; border: 1px solid #c4c4c4; background: #f2f3f5; }

.main { flex: 1; min-width: 0; display: flex; flex-direction: column; }
.docs { height: 23px; flex: none; display: flex; background: #efefef; border-bottom: 3px solid #d5d5da; }
.doc { height: 23px; background: #d3d3d8; padding: 0 6px 0 5px; gap: 5px; color: #555; font: 12px/16px Roboto, sans-serif; }
.more { width: 20px; }
.nav { height: 36px; flex: none; display: flex; align-items: center; padding: 3px 7px 0 12px; }
.m { width: 23px; height: 23px; background: #8fa5c6; color: #fff; border-radius: 2px; margin-right: 8px; }
.go { width: 17px; margin-right: 8px; height: 24px; }
.crumbs { flex: 1; height: 30px; margin-left: 1px; background: #fafafa; border-radius: 4px; display: flex; align-items: center; gap: 7px; padding-left: 19px; white-space: nowrap; }
.crumbs a { color: #111; text-decoration: none; }
.over { width: 22px; text-align: center; }
.view { height: 23px; padding: 0 10px; color: #4a8ccb; }
.view.on { background: #4a8ccb; color: #fff; border-radius: 3px; }
.canvas { flex: 1; position: relative; overflow: visible; }
.links { position: absolute; left: 0; top: 0; }
.dock { position: absolute; left: 11px; top: 7px; width: 28px; border: 1px solid #dcdcdc; border-radius: 3px; background: #fafafa; padding: 7px 0 9px; display: grid; grid-template-rows: 22px 22px; justify-items: center; }
.node { position: absolute; font: 12px/16px var(--wide); }
.card { height: 100%; border: 2px solid #000; border-radius: 6px; background: #fff; overflow: hidden; }
.head { background: linear-gradient(90deg, #fff, #cbe7ff); border-bottom: 1px solid #000; text-align: center; padding-top: 3px; }
.test .head { background: linear-gradient(90deg, #fff, #d3f3b0); }
.head strong { display: block; line-height: 17px; padding-top: 1px; margin-bottom: 2px; font-size: 11px; }
.name { display: flex; align-items: center; justify-content: center; gap: 2px; }
.tall .name { padding: 0 5px 0 6px; gap: 0; }
.tall .name span { flex: 1; }
.card p { margin: 8px 0 0; padding: 0 2px 0 8px; line-height: 17px; }
.card p.low { margin-top: 22px; line-height: 16px; }
.tall p { margin-top: 6px; line-height: 16px; padding-right: 16px; }
.drop p { padding-right: 16px; }
.drop .card { border-color: #35b58c; }
.drop .card::after { content: ""; position: absolute; left: 0; right: 0; top: 64px; bottom: 0; background: rgba(53, 181, 140, .4); }
.flag { position: absolute; left: 0; top: 0; background: #35b58c; color: #fff; font: 13px/21px var(--wide); padding: 0 3px; white-space: nowrap; }
.pin { position: absolute; top: -12px; width: 14px; height: 6px; border: 1px solid #bcbcbc; background: #fff; }
.pin.l { left: 5px; } .pin.r { right: 5px; }
.pin.lit { background: #85bafa; border-color: #555; }
.fold { position: absolute; left: 50%; bottom: -20px; width: 14px; height: 14px; margin-left: -7px; border: 1px solid #000; background: linear-gradient(#222, #222) center / 8px 1px no-repeat, #fff; }
.fold.plus { background: linear-gradient(#222, #222) center / 8px 1px no-repeat, linear-gradient(#444, #444) center / 2px 8px no-repeat, #fff; }
.pointer { position: absolute; left: 262px; top: 402px; }
.mini { position: absolute; right: 10px; bottom: 10px; width: 180px; height: 130px; border: 1px solid #8a8a8a; background: #fff; }
.right { right: 0; top: 204px; }

.status { height: 28px; flex: none; background: #e4e5e7; border-top: 1px solid #d5d5d8; display: flex; align-items: center; justify-content: flex-end; padding: 1px 4px 0 0; font: 13px/16px "Noto Sans", sans-serif; color: #555; }
.st { width: 28px; height: 22px; }
.st.on { width: 22px; border: 1px solid #b9b9bd; border-radius: 2px; background: #f0f0f1; margin-right: 3px; }
.pct { width: 45px; padding-left: 9px; margin-right: 8px; white-space: nowrap; }
.step { width: 22px; }
.in { margin-right: 4px; }
.wide { width: 38px; }
.grip { width: 12px; display: flex; justify-content: flex-end; align-self: flex-end; padding-bottom: 2px; }
.zoom { appearance: none; width: 100px; height: 16px; margin: 0 7px; background: linear-gradient(#777, #777) center / 100% 1px no-repeat; }
.zoom::-webkit-slider-thumb { appearance: none; width: 5px; height: 11px; background: #666; }
</style>
